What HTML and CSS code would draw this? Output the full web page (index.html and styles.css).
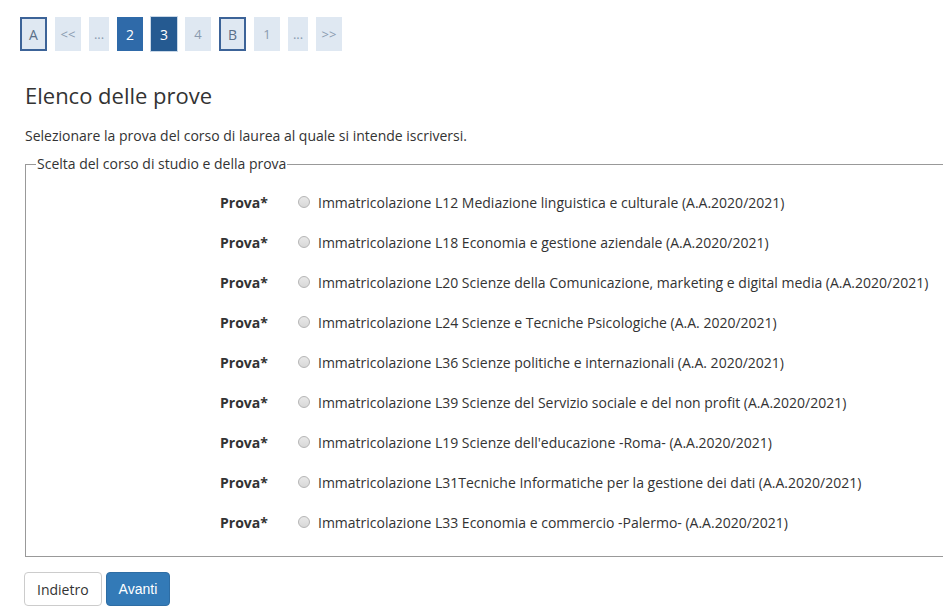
FILE: index.html
```html
<!DOCTYPE html>
<html lang="it">
<head>
    <meta charset="UTF-8">
    <meta name="viewport" content="width=device-width, initial-scale=1.0">
    <title>Elenco delle prove</title>
    <link rel="stylesheet" href="styles.css">
</head>
<body>

    <div class="pager">
        <span class="pg pg-mark">A</span>
        <span class="pg">&lt;&lt;</span>
        <span class="pg pg-small">...</span>
        <span class="pg pg-on">2</span>
        <span class="pg pg-current">3</span>
        <span class="pg">4</span>
        <span class="pg pg-mark">B</span>
        <span class="pg">1</span>
        <span class="pg pg-small">...</span>
        <span class="pg">&gt;&gt;</span>
    </div>

    <div class="content">
        <h1 class="title">Elenco delle prove</h1>
        <p class="intro">Selezionare la prova del corso di laurea al quale si intende iscriversi.</p>

        <fieldset class="box">
            <legend>Scelta del corso di studio e della prova</legend>

            <div class="row">
                <span class="row-label">Prova*</span>
                <label class="choice"><input type="radio" name="prova"> Immatricolazione L12 Mediazione linguistica e culturale (A.A.2020/2021)</label>
            </div>
            <div class="row">
                <span class="row-label">Prova*</span>
                <label class="choice"><input type="radio" name="prova"> Immatricolazione L18 Economia e gestione aziendale (A.A.2020/2021)</label>
            </div>
            <div class="row">
                <span class="row-label">Prova*</span>
                <label class="choice"><input type="radio" name="prova"> Immatricolazione L20 Scienze della Comunicazione, marketing e digital media (A.A.2020/2021)</label>
            </div>
            <div class="row">
                <span class="row-label">Prova*</span>
                <label class="choice"><input type="radio" name="prova"> Immatricolazione L24 Scienze e Tecniche Psicologiche (A.A. 2020/2021)</label>
            </div>
            <div class="row">
                <span class="row-label">Prova*</span>
                <label class="choice"><input type="radio" name="prova"> Immatricolazione L36 Scienze politiche e internazionali (A.A. 2020/2021)</label>
            </div>
            <div class="row">
                <span class="row-label">Prova*</span>
                <label class="choice"><input type="radio" name="prova"> Immatricolazione L39 Scienze del Servizio sociale e del non profit (A.A.2020/2021)</label>
            </div>
            <div class="row">
                <span class="row-label">Prova*</span>
                <label class="choice"><input type="radio" name="prova"> Immatricolazione L19 Scienze dell'educazione -Roma- (A.A.2020/2021)</label>
            </div>
            <div class="row">
                <span class="row-label">Prova*</span>
                <label class="choice"><input type="radio" name="prova"> Immatricolazione L31Tecniche Informatiche per la gestione dei dati (A.A.2020/2021)</label>
            </div>
            <div class="row">
                <span class="row-label">Prova*</span>
                <label class="choice"><input type="radio" name="prova"> Immatricolazione L33 Economia e commercio -Palermo- (A.A.2020/2021)</label>
            </div>
        </fieldset>

        <div class="actions">
            <button class="btn btn-back">Indietro</button>
            <button class="btn btn-next">Avanti</button>
        </div>
    </div>

</body>
</html>
```

FILE: styles.css
```css
body {
    font-family: "Open Sans", Arial, sans-serif;
    font-size: 14px;
    color: #333;
    margin: 0;
    background-color: #fff;
    overflow: hidden;
}

.pager {
    display: flex;
    gap: 8px;
    padding: 17px 0 0 20px;
}

.pg {
    box-sizing: border-box;
    width: 26px;
    height: 34px;
    display: flex;
    justify-content: center;
    align-items: center;
    background-color: #dfe8f2;
    color: #8a9bb0;
    font-size: 13px;
}

.pg-small {
    width: 20px;
}

.pg-mark {
    width: 27px;
    border: 2px solid #3c6398;
    color: #5a6f88;
    font-size: 14px;
}

.pg-on {
    background-color: #2f6aa9;
    color: #fff;
    font-size: 14px;
}

.pg-current {
    background-color: #255a91;
    color: #fff;
    font-size: 14px;
    box-shadow: 0 0 0 1px #c9d8e8;
}

.content {
    padding-left: 25px;
}

.title {
    font-size: 22px;
    font-weight: normal;
    margin: 29px 0 0;
    line-height: 30px;
}

.intro {
    margin: 16px 0 0;
    line-height: 20px;
}

.box {
    width: 960px;
    margin: 9px 0 0;
    padding: 9px 0 14px;
    border: 1px solid #999;
    border-right: none;
    box-sizing: border-box;
}

.box legend {
    margin-left: 10px;
    padding: 0 1px;
    line-height: 18px;
}

.row {
    display: flex;
    align-items: center;
    height: 40px;
    padding-left: 194px;
}

.row-label {
    width: 78px;
    font-weight: bold;
}

.choice {
    display: flex;
    align-items: center;
    white-space: nowrap;
}

.choice input {
    appearance: none;
    width: 12px;
    height: 12px;
    margin: 0 8px 0 0;
    border: 1px solid #b5b5b5;
    border-radius: 50%;
    background: linear-gradient(#e8e8e8, #d8d8d8);
}

.actions {
    display: flex;
    gap: 4px;
    margin-top: 15px;
    margin-left: -1px;
}

.btn {
    height: 34px;
    padding: 0 12px;
    border-radius: 4px;
    font-size: 14px;
    cursor: pointer;
}

.btn-back {
    background-color: #fff;
    border: 1px solid #ccc;
    color: #333;
    font-family: "Open Sans", Arial, sans-serif;
}

.btn-next {
    background-color: #337ab7;
    border: 1px solid #2e6da4;
    color: #fff;
    font-family: "Liberation Sans", Arial, sans-serif;
}
```
